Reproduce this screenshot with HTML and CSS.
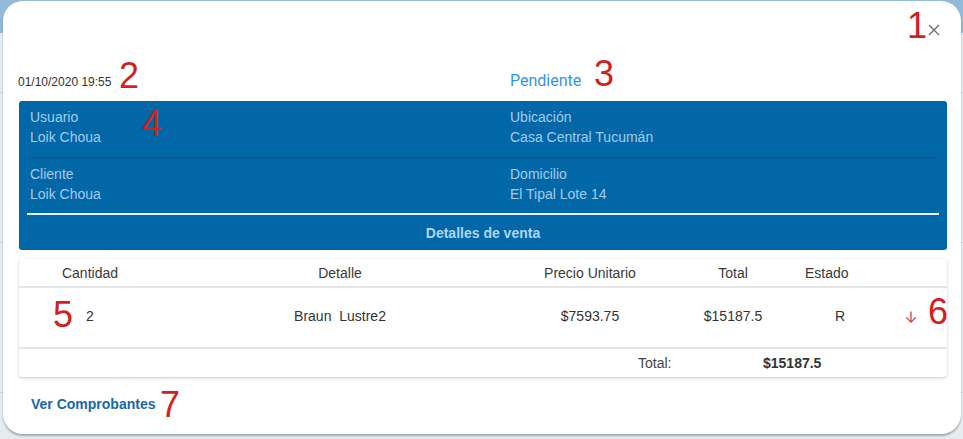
FILE: index.html
```html
<!DOCTYPE html>
<html lang="es">
<head>
<meta charset="utf-8">
<title>Detalle de venta</title>
<link rel="stylesheet" href="styles.css">
</head>
<body>
<div class="backdrop">
  <div class="modal">
    <div class="topbar">
      <button class="close" aria-label="Cerrar">
        <svg width="12" height="12" viewBox="0 0 12 12"><path d="M1 1 L11 11 M11 1 L1 11" stroke="#6f6f6f" stroke-width="1.4" fill="none"/></svg>
      </button>
    </div>
    <div class="inforow">
      <span class="date">01/10/2020 19:55</span>
      <span class="status">Pendiente</span>
    </div>
    <div class="panel">
      <div class="prow">
        <div class="field"><div>Usuario</div><div>Loik Choua</div></div>
        <div class="field"><div>Ubicación</div><div>Casa Central Tucumán</div></div>
      </div>
      <div class="pdiv"></div>
      <div class="prow prow2">
        <div class="field"><div>Cliente</div><div>Loik Choua</div></div>
        <div class="field"><div>Domicilio</div><div>El Tipal Lote 14</div></div>
      </div>
      <div class="pline"></div>
      <div class="ptitle">Detalles de venta</div>
    </div>
    <div class="card">
      <div class="trow thead">
        <div class="c">Cantidad</div>
        <div class="c">Detalle</div>
        <div class="c">Precio Unitario</div>
        <div class="c">Total</div>
        <div class="l">Estado</div>
        <div></div>
      </div>
      <div class="trow tbody">
        <div class="c">2</div>
        <div class="c">Braun&nbsp; Lustre2</div>
        <div class="c">$7593.75</div>
        <div class="c">$15187.5</div>
        <div class="c">R</div>
        <div class="c arrow">
          <svg width="14" height="14" viewBox="0 0 14 14"><path d="M7 1.5 V12 M2.2 7.4 L7 12.2 L11.8 7.4" stroke="#e53935" stroke-width="1.3" fill="none"/></svg>
        </div>
      </div>
      <div class="tfoot">
        <div class="spacer"></div>
        <div class="flabel">Total:</div>
        <div class="fvalue">$15187.5</div>
      </div>
    </div>
    <div class="actions">
      <a class="link" href="#">Ver Comprobantes</a>
    </div>
    <span class="ann a1">1</span>
    <span class="ann a2">2</span>
    <span class="ann a3">3</span>
    <span class="ann a4">4</span>
    <span class="ann a5">5</span>
    <span class="ann a6">6</span>
    <span class="ann a7">7</span>
  </div>
</div>
</body>
</html>
```
FILE: styles.css
```css
html, body {
  margin: 0;
  padding: 0;
}
body {
  width: 963px;
  height: 439px;
  overflow: hidden;
  font-family: "Liberation Sans", Arial, sans-serif;
  background: #e4ebf1;
}
.backdrop {
  height: 439px;
  box-sizing: border-box;
  padding: 1px 2px 0 3px;
  background:
    linear-gradient(#93bad9, #93bad9) 0 0 / 100% 33px no-repeat,
    repeating-linear-gradient(180deg, transparent 0, transparent 92px, #cdd8e1 92px, #cdd8e1 93px, transparent 93px, transparent 150px) 0 0 / 100% 100%,
    #e4ebf1;
}
.modal {
  position: relative;
  width: 958px;
  height: 433px;
  box-sizing: border-box;
  background: #fff;
  border-radius: 20px;
  box-shadow: 0 2px 2px rgba(0, 0, 0, 0.28);
  padding: 0 14px 0 16px;
}
.topbar {
  height: 56px;
  display: flex;
  justify-content: flex-end;
  align-items: flex-start;
}
.close {
  margin-top: 22px;
  margin-right: 6px;
  width: 14px;
  height: 14px;
  padding: 1px;
  border: 0;
  background: transparent;
  display: flex;
  align-items: center;
  justify-content: center;
}
.inforow {
  height: 44px;
  display: grid;
  grid-template-columns: 492px 1fr;
  align-items: center;
  margin-left: -1px;
}
.date {
  font-size: 12px;
  color: #333;
  padding-top: 5px;
}
.status {
  font-family: Roboto, "Liberation Sans", sans-serif;
  font-size: 16px;
  color: #2f96eb;
  padding-top: 3px;
}
.panel {
  background: #0167a7;
  border-radius: 3px;
  height: 149px;
  color: #a3cbee;
  font-size: 14px;
  line-height: 20px;
  padding: 0 8px;
  box-sizing: border-box;
}
.prow {
  display: grid;
  grid-template-columns: 480px 1fr;
  padding: 6px 0 0 3px;
  height: 56px;
  box-sizing: border-box;
}
.prow2 {
  height: 54px;
  padding-top: 5px;
}
.pdiv {
  height: 2px;
  background: #0a5f99;
}
.pline {
  height: 2px;
  background: #e8f1f8;
}
.ptitle {
  text-align: center;
  font-weight: bold;
  color: #b3d4f0;
  padding-top: 8px;
}
.card {
  margin-top: 9px;
  background: #fff;
  border-radius: 3px;
  box-shadow: 0 1px 3px rgba(0, 0, 0, 0.22);
  font-size: 14px;
  color: #333;
}
.trow {
  display: grid;
  grid-template-columns: 142px 358px 142px 144px 70px 1fr;
  align-items: center;
}
.thead {
  height: 27px;
  border-bottom: 2px solid #e6e6e6;
  color: #3a3a3a;
}
.tbody {
  box-sizing: border-box;
  height: 61px;
  padding-bottom: 4px;
  border-bottom: 2px solid #e6e6e6;
}
.c { text-align: center; }
.l { text-align: left; }
.arrow {
  display: flex;
  justify-content: center;
  padding-top: 2px;
}
.tfoot {
  height: 28px;
  display: grid;
  grid-template-columns: 619px 125px 1fr;
  align-items: center;
}
.flabel { color: #444; }
.fvalue { font-weight: bold; color: #333; }
.actions {
  padding: 18px 0 0 12px;
}
.link {
  font-size: 14px;
  font-weight: bold;
  color: #1767a8;
  text-decoration: none;
}
.ann {
  position: absolute;
  font-family: "Liberation Sans", Arial, sans-serif;
  font-size: 36px;
  line-height: 36px;
  color: #d21f1f;
}
.a1 { left: 904px; top: 7px; }
.a2 { left: 116px; top: 57px; }
.a3 { left: 591px; top: 55px; }
.a4 { left: 139px; top: 105px; }
.a5 { left: 50px; top: 296px; }
.a6 { left: 925px; top: 293px; }
.a7 { left: 157px; top: 386px; }
```
